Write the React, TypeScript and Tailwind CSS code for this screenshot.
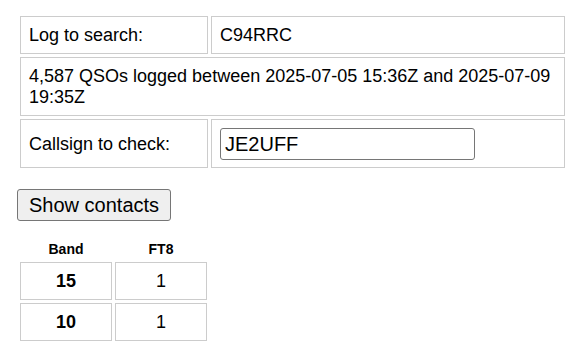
export default function App() {
  const cell = "border border-[#cccccc] px-[8px] align-middle";
  return (
    <div className="min-h-[356px] bg-white pl-[17px] pt-[13px] text-black" style={{ fontFamily: '"Liberation Sans", Arial, sans-serif' }}>
      <table className="border-separate border-spacing-[3px] text-[18px]">
        <tbody>
          <tr>
            <td className={`${cell} w-[188px] py-[8px] leading-[20px]`}>Log to search:</td>
            <td className={`${cell} w-[354px] py-[8px] leading-[20px]`}>C94RRC</td>
          </tr>
          <tr>
            <td colSpan={2} className={`${cell} py-[8px] leading-[20.6px]`}>
              4,587 QSOs logged between 2025-07-05 15:36Z and 2025-07-09 19:35Z
            </td>
          </tr>
          <tr>
            <td className={`${cell} py-[8px] leading-[20px]`}>Callsign to check:</td>
            <td className={`${cell} pt-[8px] pb-[7px]`}>
              <input
                type="text"
                defaultValue="JE2UFF"
                className="box-border block h-[32px] w-[255px] rounded-[3px] border border-[#767676] bg-white px-[4px] text-[20px] leading-[23px] text-black outline-none"
                style={{ fontFamily: '"Liberation Sans", Arial, sans-serif' }}
              />
            </td>
          </tr>
        </tbody>
      </table>

      <button
        type="button"
        className="mt-[18px] box-border block h-[32px] rounded-[3px] border border-[#767676] bg-[#efefef] px-[11px] text-[20px] leading-[23px] text-black"
        style={{ fontFamily: '"Liberation Sans", Arial, sans-serif' }}
      >
        Show contacts
      </button>

      <table className="mt-[15px] border-separate border-spacing-[3px]">
        <thead>
          <tr>
            <th className="w-[92px] py-[2px] text-center text-[14px] font-bold leading-[16px]">Band</th>
            <th className="w-[92px] py-[2px] text-center text-[14px] font-bold leading-[16px]">FT8</th>
          </tr>
        </thead>
        <tbody>
          <tr>
            <td className="w-[92px] border border-[#cccccc] py-[8px] text-center text-[18px] font-bold leading-[20px]">15</td>
            <td className="w-[92px] border border-[#cccccc] py-[8px] text-center text-[18px] leading-[20px]">1</td>
          </tr>
          <tr>
            <td className="w-[92px] border border-[#cccccc] py-[8px] text-center text-[18px] font-bold leading-[20px]">10</td>
            <td className="w-[92px] border border-[#cccccc] py-[8px] text-center text-[18px] leading-[20px]">1</td>
          </tr>
        </tbody>
      </table>
    </div>
  );
}
